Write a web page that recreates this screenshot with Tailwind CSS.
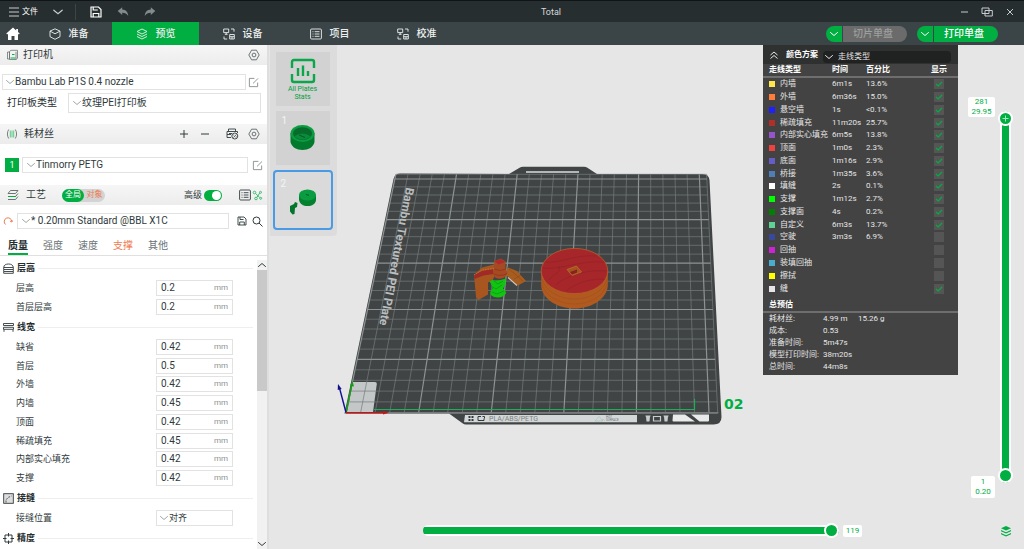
<!DOCTYPE html>
<html lang="zh-CN">
<head>
    <meta charset="UTF-8">
    <meta name="viewport" content="width=device-width, initial-scale=1.0">
    <title>Total</title>
    <script src="https://cdn.jsdelivr.net/npm/@tailwindcss/browser@4"></script>
</head>
<body class="flex h-screen flex-col overflow-hidden bg-[#e6e6e6] font-['Roboto','Noto_Sans_CJK_SC',sans-serif] text-[9px] leading-3 text-[#303a3c]">
    <!-- Shared icons -->
    <svg class="hidden">
        <symbol id="i-chevron" viewBox="0 0 10 10"><path d="M1.500 3.500 5 6.500l3.500-3" fill="none" stroke="currentColor" stroke-linecap="round"/></symbol>
        <symbol id="i-gear" viewBox="0 0 12 12"><g fill="none" stroke="currentColor" stroke-width=".9"><path d="M3.500 1.200h5L9.400 3l1.800 3-1.800 3-.9 1.800h-5L2.600 9 .8 6l1.800-3z" stroke-linejoin="round"/><circle cx="6" cy="6" r="1.900"/></g></symbol>
        <symbol id="i-edit" viewBox="0 0 12 12"><path d="M7 1.500H1.500v9h9V6M5.500 7 11 1.500" fill="none" stroke="currentColor" stroke-width=".9" stroke-linejoin="round"/></symbol>
        <symbol id="i-device" viewBox="0 0 12 12"><path d="M.7 1h5v3.600h-5zM3.200 4.600v1.700M1.800 6.300h2.800M8 1h3v2.700M1 8.500V11h3.200M6.700 6.500h4.600V11H6.700zM6.700 8.700h4.600M9 8.700V11" fill="none" stroke="currentColor" stroke-width=".9"/></symbol>
        <symbol id="i-list" viewBox="0 0 12 12"><g fill="none" stroke="currentColor" stroke-width=".9"><rect x=".6" y="1" width="10.800" height="10" rx="1"/><path d="M2.500 3.700h1M4.700 3.700h4.800M2.500 6h1M4.700 6h4.800M2.500 8.300h1M4.700 8.300h4.800"/></g></symbol>
    </svg>

    <!-- Title bar -->
    <header class="flex h-[22px] shrink-0 items-center border-t border-[#101416] bg-[#262e30] text-[#c8cccd]">
        <div class="flex w-40 items-center pl-2">
            <button class="flex items-center gap-0.5 text-[8px] text-white">
                <svg class="h-3 w-3" viewBox="0 0 12 12"><path d="M1 2h10M1 6h10M1 10h10" stroke="#c8cccd"/></svg>文件
            </button>
            <button class="ml-[14px]" aria-label="展开"><svg class="h-3 w-3"><use href="#i-chevron"/></svg></button>
            <span class="ml-[11px] h-4 w-px bg-[#3d4547]"></span>
            <button class="ml-[14px]" aria-label="保存"><svg class="h-3 w-3" viewBox="0 0 12 12"><path d="M1 1h7.500L11 3.500V11H1zM3.200 1v3h4.600M3.200 11V7.500h5.600V11" fill="none" stroke="#fff" stroke-width="1.200"/></svg></button>
            <button class="ml-[15px]" aria-label="撤销"><svg class="h-3 w-3" viewBox="0 0 12 12"><path d="M.7 5 5.200 1.200v2.300C8.800 3.700 11 6 11.200 10 9.800 7.700 8 6.700 5.200 6.700V9z" fill="#838a8c"/></svg></button>
            <button class="ml-[15px]" aria-label="重做"><svg class="h-3 w-3" viewBox="0 0 12 12"><path d="M11.300 5 6.800 1.200v2.300C3.200 3.700 1 6 .8 10 2.200 7.700 4 6.700 6.800 6.700V9z" fill="#838a8c"/></svg></button>
        </div>
        <h1 class="flex-1 text-center text-[9px] text-[#d6d9da]">Total</h1>
        <div class="flex w-[82px] items-center justify-end gap-[11px] pr-2">
            <button aria-label="最小化"><svg class="h-3 w-3" viewBox="0 0 12 12"><path d="M3 6h7" stroke="currentColor"/></svg></button>
            <button aria-label="还原"><svg class="h-3 w-3" viewBox="0 0 12 12"><path d="M1 2h7v5.500H1zM4 4.500h7.300V10H4z" fill="none" stroke="currentColor"/></svg></button>
            <button aria-label="关闭"><svg class="h-3 w-3" viewBox="0 0 12 12"><path d="m3 3 6 6M9 3 3 9" stroke="currentColor"/></svg></button>
        </div>
    </header>

    <!-- Main tabs -->
    <nav class="flex h-[23px] shrink-0 items-center bg-[#3b4446] text-[10px] font-medium text-[#eef0f0]">
        <button class="flex w-[25px] justify-center" aria-label="主页"><svg class="h-[14px] w-[14px]" viewBox="0 0 14 14"><path d="M7 .5.3 6.600l.9.9.8-.7V13h3.500V9h3v4H12V6.800l.8.7.9-.9L12 5V2h-1.800v1.400z" fill="#fff"/></svg></button>
        <button class="flex h-full w-[87px] items-center justify-center gap-2"><svg class="h-3 w-3" viewBox="0 0 12 12"><path d="m6 .8 5 2.300v5.600L6 11.300 1 8.700V3.100zM1 3.100l5 2.700 5-2.700" fill="none" stroke="currentColor" stroke-width=".9" stroke-linejoin="round"/></svg>准备</button>
        <button class="flex h-full w-[87px] items-center justify-center gap-2 bg-[#00ae42]"><svg class="h-3 w-3" viewBox="0 0 12 12"><path d="m6 1 5 2.500L6 6 1 3.500zM1 6l5 2.500L11 6M1 8.500 6 11l5-2.500" fill="none" stroke="currentColor" stroke-width=".9" stroke-linejoin="round"/></svg>预览</button>
        <button class="flex h-full w-[87px] items-center justify-center gap-2"><svg class="h-3 w-3"><use href="#i-device"/></svg>设备</button>
        <button class="flex h-full w-[87px] items-center justify-center gap-2"><svg class="h-3 w-3"><use href="#i-list"/></svg>项目</button>
        <button class="flex h-full w-[87px] items-center justify-center gap-2"><svg class="h-3 w-3"><use href="#i-device"/></svg>校准</button>
        <div class="ml-auto flex gap-[10px] pr-[26px]">
            <div class="flex h-4 gap-px overflow-hidden rounded-full">
                <button class="flex w-4 items-center justify-center bg-[#00ae42] text-white" aria-label="切片选项"><svg class="h-[10px] w-[10px]"><use href="#i-chevron"/></svg></button>
                <button class="w-16 bg-[#6b6b6b] pr-1 text-[#9b9f9f]" disabled>切片单盘</button>
            </div>
            <div class="flex h-4 gap-px overflow-hidden rounded-full">
                <button class="flex w-4 items-center justify-center bg-[#00ae42] text-white" aria-label="打印选项"><svg class="h-[10px] w-[10px]"><use href="#i-chevron"/></svg></button>
                <button class="w-16 bg-[#00ae42] pr-1 font-medium text-white">打印单盘</button>
            </div>
        </div>
    </nav>

    <div class="flex min-h-0 flex-1">
        <!-- Sidebar -->
        <aside class="flex w-[269px] shrink-0 flex-col border-r-2 border-[#dedede] bg-white">
            <div class="flex h-5 shrink-0 items-center bg-linear-to-b from-[#f6f6f6] to-[#ececec] px-[7px]">
                <svg class="h-3 w-[11px]" viewBox="0 0 11 12"><path d="M.5 3h2v7h-2zM2.500 2.500 4 1.300h6.500v8L9 10.500H2.500zM9 2.800v7.500" fill="none" stroke="#6b7375" stroke-width=".8"/><path d="M3.500 9h5M5 5.500h2.500" stroke="#00ae42" stroke-width="1.200"/></svg>
                <h2 class="ml-[5px] text-[10px]">打印机</h2>
                <button class="ml-auto text-[#5c6567]" aria-label="打印机设置"><svg class="h-3 w-3"><use href="#i-gear"/></svg></button>
            </div>
            <div class="mt-[9px] flex items-center gap-[2px] pl-[2px]">
                <div class="flex h-4 w-[244px] items-center border border-[#e2e2e2] pl-[2px]">
                    <svg class="h-[10px] w-[10px] text-[#a0a6a7]"><use href="#i-chevron"/></svg>
                    <select class="flex-1 appearance-none text-[10px]" aria-label="打印机型号"><option>Bambu Lab P1S 0.4 nozzle</option></select>
                </div>
                <button class="text-[#7b8385]" aria-label="编辑打印机"><svg class="h-[11px] w-[11px]"><use href="#i-edit"/></svg></button>
            </div>
            <div class="mt-[3px] flex items-center pr-[6px] pl-[7px]">
                <label for="bed" class="w-[61px] text-[10px] text-[#262e30]">打印板类型</label>
                <div class="flex h-5 flex-1 items-center border border-[#e2e2e2] pl-[3px]">
                    <svg class="h-[10px] w-[10px] text-[#a0a6a7]"><use href="#i-chevron"/></svg>
                    <select id="bed" class="flex-1 appearance-none text-[10px]"><option>纹理PEI打印板</option></select>
                </div>
            </div>

            <div class="mt-[11px] flex h-5 shrink-0 items-center bg-linear-to-b from-[#f6f6f6] to-[#ececec] px-[7px]">
                <svg class="h-3 w-[10px]" viewBox="0 0 10 12"><path d="M1.700 1.500C0 4 0 8 1.700 10.500M8.300 1.500C10 4 10 8 8.300 10.500" fill="none" stroke="#6b7375" stroke-width=".9"/><path d="M3.300 2.500v7M5 2.500v7M6.700 2.500v7" stroke="#4fc47c" stroke-width=".9"/></svg>
                <h2 class="ml-[7px] text-[10px]">耗材丝</h2>
                <button class="ml-auto" aria-label="添加耗材"><svg class="h-[10px] w-[10px]" viewBox="0 0 10 10"><path d="M1 5h8M5 1v8" stroke="currentColor"/></svg></button>
                <button class="ml-[11px]" aria-label="删除耗材"><svg class="h-[10px] w-[10px]" viewBox="0 0 10 10"><path d="M1 5h8" stroke="currentColor"/></svg></button>
                <button class="ml-[16px]" aria-label="同步耗材"><svg class="h-3 w-[13px]" viewBox="0 0 13 12"><path d="M2.500 3.500V1h7v2.500M1 3.500h10.500V5M1 3.500V9.500h4M3 5.500h3M1 6.500h4" fill="none" stroke="currentColor" stroke-width=".9"/><circle cx="8.800" cy="8" r="3" fill="#f0f0f0" stroke="currentColor" stroke-width=".9"/><path d="m7.500 9.500 2.800-3M7.200 7.500l.5-1M10.400 8.500l-.5 1" stroke="currentColor" stroke-width=".8"/></svg></button>
                <button class="ml-[9px] text-[#5c6567]" aria-label="耗材设置"><svg class="h-3 w-3"><use href="#i-gear"/></svg></button>
            </div>
            <div class="mt-[13px] flex items-center pr-1 pl-[5px]">
                <span class="flex h-[14px] w-[14px] items-center justify-center bg-[#00ae42] text-white">1</span>
                <div class="ml-[3px] flex h-4 w-[227px] items-center border border-[#e2e2e2] pl-[3px]">
                    <svg class="h-[10px] w-[10px] text-[#a0a6a7]"><use href="#i-chevron"/></svg>
                    <select class="flex-1 appearance-none text-[10px]" aria-label="耗材"><option>Tinmorry PETG</option></select>
                </div>
                <button class="ml-[4px] text-[#7b8385]" aria-label="编辑耗材"><svg class="h-[11px] w-[11px]"><use href="#i-edit"/></svg></button>
            </div>

            <div class="mt-3 flex h-5 shrink-0 items-center bg-linear-to-b from-[#f6f6f6] to-[#ececec] pr-1 pl-[7px]">
                <svg class="h-3 w-3" viewBox="0 0 12 12"><path d="M3.500 1.500H11L8.500 4.500H1zM1 7.500h7.500L11 4.500M1 10.500h7.500L11 7.500" fill="none" stroke="#5c6567" stroke-width=".9" stroke-linejoin="round"/><path d="M1 7.500h7.500l1-1" fill="none" stroke="#00ae42"/></svg>
                <h2 class="ml-[7px] text-[10px]">工艺</h2>
                <div class="ml-4 flex h-[13px] w-[43px] items-center rounded-full bg-[#d3d3d3] text-[8px]">
                    <button class="h-full w-[22px] rounded-full bg-[#00ae42] text-white">全局</button>
                    <button class="flex-1 text-[#f07a50]">对象</button>
                </div>
                <label for="advanced" class="ml-auto text-[9px]">高级</label>
                <span class="relative ml-[2px] flex">
                    <input id="advanced" type="checkbox" checked class="peer h-[11px] w-[18px] appearance-none rounded-full bg-[#b5b5b5] checked:bg-[#00ae42]">
                    <span class="pointer-events-none absolute top-px left-px h-[9px] w-[9px] rounded-full bg-white peer-checked:left-2"></span>
                </span>
                <button class="ml-[17px]" aria-label="参数列表"><svg class="h-3 w-3"><use href="#i-list"/></svg></button>
                <button class="ml-px text-[#3fbf70]" aria-label="对比"><svg class="h-[11px] w-[11px]" viewBox="0 0 11 11"><g fill="none" stroke="currentColor"><circle cx="2.500" cy="2.500" r="1.300"/><circle cx="8.500" cy="2.300" r="1"/><circle cx="4" cy="8.500" r="1.300"/><circle cx="8.700" cy="8.300" r="1"/><path d="m3.500 3.500 4.300 4M7.700 3 5 7.300"/></g></svg></button>
            </div>
            <div class="mt-[8px] flex items-center pr-1 pl-[3px]">
                <button class="text-[#f07a50]" aria-label="重置"><svg class="h-[10px] w-[10px]" viewBox="0 0 10 10"><path d="M2.500 8.500A3.800 3.800 0 1 1 8.800 5.500M7 5l1.800 1L10 4.300" fill="none" stroke="currentColor"/></svg></button>
                <div class="ml-[4px] flex h-4 w-[212px] items-center border border-[#e2e2e2] pl-[3px]">
                    <svg class="h-[10px] w-[10px] text-[#a0a6a7]"><use href="#i-chevron"/></svg>
                    <select class="flex-1 appearance-none text-[10px]" aria-label="工艺预设"><option>* 0.20mm Standard @BBL X1C</option></select>
                </div>
                <button class="ml-auto" aria-label="保存预设"><svg class="h-[10px] w-[10px]" viewBox="0 0 10 10"><path d="M1 1h6l2 2v6H1zM3 1v2.500h3.500M2.700 9V6h4.600v3" fill="none" stroke="currentColor" stroke-width=".9"/></svg></button>
                <button class="ml-[5px]" aria-label="搜索"><svg class="h-[11px] w-[11px]" viewBox="0 0 11 11"><circle cx="4.500" cy="4.500" r="3.500" fill="none" stroke="currentColor"/><path d="m7 7 3.500 3.500" stroke="currentColor"/></svg></button>
            </div>
            <div class="mt-[10px] flex h-[17px] shrink-0 gap-[15px] border-b border-[#e0e0e0] pl-2 text-[10px] text-[#6b7375]">
                <button class="h-4 border-b-2 border-[#00ae42] font-bold text-[#262e30]">质量</button>
                <button class="h-4 pb-0.5">强度</button>
                <button class="h-4 pb-0.5">速度</button>
                <button class="h-4 pb-0.5 text-[#f07a50]">支撑</button>
                <button class="h-4 pb-0.5">其他</button>
            </div>

            <!-- Parameters -->
            <div class="flex min-h-0 flex-1">
                <div class="flex-1 overflow-hidden pt-[6px] pr-1 pl-[3px]">
                    <div class="flex h-3 items-center gap-[3px]">
                        <svg class="h-[11px] w-[11px]" viewBox="0 0 11 11"><path d="M.7 4.500C.7 2 3 1 5.500 1s4.800 1 4.800 3.500zM.7 4.500v2h9.600v-2M.7 6.500v2h9.600v-2M.7 8.500v1.800h9.600V8.500" fill="none" stroke="#303a3c" stroke-width=".9"/></svg>
                        <h3 class="font-bold text-[#262e30]">层高</h3><span class="h-px flex-1 bg-[#eeeeee]"></span>
                    </div>
                    <div id="heightRows" class="mt-[6px] flex h-[35px] flex-col justify-between"></div>
                    <div class="mt-[6px] flex h-3 items-center gap-[3px]">
                        <svg class="h-[11px] w-[11px]" viewBox="0 0 11 11"><path d="M.5 1.500h10v2H.5zM.5 5.300h10v2H.5zM1 7.300v2.500M10 7.300v2.500" fill="none" stroke="#303a3c" stroke-width=".9"/></svg>
                        <h3 class="font-bold text-[#262e30]">线宽</h3><span class="h-px flex-1 bg-[#eeeeee]"></span>
                    </div>
                    <div id="widthRows" class="mt-[6px] flex h-[147px] flex-col justify-between"></div>
                    <div class="mt-[6px] flex h-3 items-center gap-[3px]">
                        <svg class="h-[11px] w-[11px]" viewBox="0 0 11 11"><rect x=".7" y=".7" width="9.600" height="9.600" fill="#ddd" stroke="#303a3c" stroke-width=".9"/><path d="M3 9.500V7l2-2.500L8.500 3" fill="none" stroke="#303a3c" stroke-width=".8" stroke-dasharray="2 1"/></svg>
                        <h3 class="font-bold text-[#262e30]">接缝</h3><span class="h-px flex-1 bg-[#eeeeee]"></span>
                    </div>
                    <div class="mt-[6px] flex h-4 items-center pl-[13px]">
                        <label for="seam" class="w-[140px]">接缝位置</label>
                        <div class="flex h-4 w-[77px] items-center border border-[#e2e2e2] pl-[2px]">
                            <svg class="h-[10px] w-[10px] text-[#a0a6a7]"><use href="#i-chevron"/></svg>
                            <select id="seam" class="flex-1 appearance-none"><option>对齐</option></select>
                        </div>
                    </div>
                    <div class="mt-[6px] flex h-3 items-center gap-[3px]">
                        <svg class="h-[11px] w-[11px]" viewBox="0 0 11 11"><path d="M2 2h7v7H2zM5.500 0v3.500M5.500 7.500V11M0 5.500h3.500M7.500 5.500H11" fill="none" stroke="#303a3c"/></svg>
                        <h3 class="font-bold text-[#262e30]">精度</h3><span class="h-px flex-1 bg-[#eeeeee]"></span>
                    </div>
                </div>
                <div class="mt-[4px] flex w-[10px] flex-col bg-[#f1f1f1]">
                    <svg class="h-[10px] w-[10px] rotate-180"><use href="#i-chevron"/></svg>
                    <div class="h-[121px] bg-[#c9c9c9]"></div>
                    <svg class="mt-auto h-[10px] w-[10px]"><use href="#i-chevron"/></svg>
                </div>
            </div>
        </aside>

        <!-- 3D canvas -->
        <main class="relative flex-1 overflow-hidden">
            <svg class="absolute inset-0 h-full w-full" viewBox="269 45 755 504">
                <!-- plate body -->
                <path d="M509 174l11-6.500q1-.7 3-.7h61q2 0 3 .7l10 6.500h105q7 0 7.500 6L721.500 417q0 7.500-8 7.500H466q-2 0-3.500-1.200L449 413.500H344.500L393.500 179q1.500-5.500 7-5.500z" fill="#404445"/>
                <path d="M526 171.300h53v1.500h-53z" fill="#dcdede"/>
                <path d="M353 382h22q2 0 1.800 2L373 412h-26z" fill="#c3c7c7"/>
                <path id="gridThin" fill="none" stroke="#767b7b" stroke-width=".7"/>
                <path id="gridThick" fill="none" stroke="#8d9292" stroke-width="1.200"/>
                <path d="M346 412.800h372.500" stroke="#7c8181"/>
                <path d="M374 409.500h320.500V399" fill="none" stroke="#1fae57" stroke-width="1.200"/>
                <!-- front label strip -->
                <path d="M465 415h172v7.200H464z" fill="#d3d7d7"/>
                <path d="M468.500 416h2v2h-2zM471.500 416h2v2h-2zM468.500 419h2v2h-2zM471.500 419h2v2h-2z" fill="#303a3c"/>
                <path d="M478 416.500h3M478 416.500v4h6v-2M482.500 416.500h2v2" fill="none" stroke="#303a3c"/>
                <text x="489" y="421" class="font-['Roboto'] text-[7px]" fill="#7c8484">PLA/ABS/PETG</text>
                <path d="m595 421 4-4.500 4 4.500zM601 421l2-2 2 2" fill="none" stroke="#a9c0b8" stroke-width=".6"/>
                <text x="606" y="418" class="font-['Roboto'] text-[3px]" fill="#6b7375">HOT</text>
                <text x="606" y="421" class="font-['Roboto'] text-[3px]" fill="#6b7375">SURFACE</text>
                <path d="M645.500 415.500h5v1h-.5l-.5 5h-3l-.5-5h-.5zM663.500 415.500h5v1h-.5l-.5 5h-3l-.5-5h-.5z" fill="#c9cdcd"/>
                <path d="M653.500 416.500h7v4.500h-7z" fill="none" stroke="#c9cdcd" stroke-width="1.200"/>
                <path d="M673 414.500h12l10 7H673.500q-1 0-1-1zM691 414.500h18v6q0 1-1 1h-8.500z" fill="#e9ebeb"/>
                <text transform="translate(406 187) rotate(101)" class="font-['Roboto'] text-[12px] font-bold" fill="#b9bdbd">Bambu Textured PEI Plate</text>
                <text x="724" y="409" class="font-['DejaVu_Sans'] text-[14px] font-bold" fill="#00ae42">02</text>
                <!-- axes -->
                <path d="M346 412.500 352 384" stroke="#12a012" stroke-width="1.400"/><path d="m352.500 381 1.500 5.500-4-1z" fill="#12a012"/>
                <path d="M346 412.500 339.500 388" stroke="#101090" stroke-width="1.400"/><path d="m338 384 3.700 5-4 1z" fill="#101090"/>
                <path d="M346 412.800h38" stroke="#c01818" stroke-width="1.400"/><path d="m389 412.800-6-1.800v3.600z" fill="#c01818"/>
                <!-- disc -->
                <path d="M541.200 271v15c1 13 16 22.500 33.300 22.500S606.500 299 607.800 286v-15z" fill="#b05a20"/>
                <path d="M542 279c3 12 17 20 32.500 20S604 291 607 279M542 284c3 12 17 20 32.500 20S604 296 607 284" fill="none" stroke="#a34f1b" stroke-width=".6"/>
                <ellipse cx="574.500" cy="271" rx="33.300" ry="22.600" fill="#a6262a" stroke="#b8602a" stroke-width=".8"/>
                <path d="M545 262c14 2 30-8 52-6M543 268c20 2 36-8 61-6M556 285c8-8 30-16 50-14M549 280c6-8 12-6 10-14M566 291c10-8 22-12 38-12" fill="none" stroke="#8f2226" stroke-width=".6"/>
                <path d="m567 269.500 9.500-3.500 5 6-9.500 3.500z" fill="#a3541f" stroke="#c0802f" stroke-width=".6"/>
                <path d="m570 272 7-2.500v3l-5 2z" fill="#8a2020"/>
                <!-- small part -->
                <path d="M488 279q8 3 18-.5l-.5 6-2.500 4q3 2 3 5-3 4-8 4t-7.500-3q-.5-3 2-6-1-5-4.500-9.500z" fill="#12c412"/>
                <path d="m491 286 5 3 6-4M492 292l5 2 7-3M494 281l4 3 5-3" fill="none" stroke="#0a9a14" stroke-width=".8"/>
                <path d="m474 275 8-7.500 12-3 2 8-3 7-5 3v12l-9.500 5.500-2.500-3z" fill="#a8561f"/>
                <path d="m474 275 8-4 11-2 .5 5-10 1.500-9 3.500z" fill="#a02a28"/>
                <path d="m474 275 8-5 12-1.500" fill="none" stroke="#c07a30" stroke-width=".8" stroke-dasharray="1.500 1"/>
                <path d="m507 267 10 4 9 10-8 4.500-11-9.500z" fill="#a85d20"/>
                <path d="m508 277.500 9 8" stroke="#d8c6b8" stroke-width="1.200"/>
                <path d="m509 269 14 12M514 279l7-4" stroke="#8d4a16" stroke-width=".7"/>
                <path d="m494 261 7-2.500 4.500 3v7l2 4q-.5 5-6 6t-8-3l1-8z" fill="#a54a22"/>
                <path d="m494.500 261 6.500-2 4 3-6.500 2.500z" fill="#b02a2b"/>
                <path d="M494 269q6 3 12 0M493.500 274q7 3 13.500-.5" fill="none" stroke="#8d3416" stroke-width=".7"/>
            </svg>

            <!-- Plate list -->
            <div class="absolute top-0 left-px flex w-[67px] flex-col items-center gap-[5px] rounded-br bg-[#dcdcdc] pt-[7px] pr-[2px] pb-[6px]">
                <button class="flex h-[54px] w-[54px] flex-col items-center bg-[#d2d2d2] pt-[6px] text-[7px] leading-2 text-[#00a03c]">
                    <svg class="mb-px h-[26px] w-[26px] shrink-0" viewBox="0 0 26 26"><path d="M2 10V4q0-2 2-2h18q2 0 2 2v6M2 16v6q0 2 2 2h18q2 0 2-2v-6M8 10v8M13 7.500V18M18 13v5" fill="none" stroke="#0aa64a" stroke-width="2.400"/></svg>
                    All Plates<br>Stats
                </button>
                <button class="relative h-[54px] w-[54px] bg-[#d2d2d2]" aria-label="盘 1">
                    <span class="absolute top-1 left-1.5 text-[10px] text-[#f4f4f4]">1</span>
                    <svg class="h-full w-full" viewBox="0 0 54 54"><path d="M14.500 22v9c1 5 6 8 12 8s11-3 12-8v-9z" fill="#027a2e"/><ellipse cx="26.500" cy="22.500" rx="12" ry="8.500" fill="#0a9c40"/><ellipse cx="26.500" cy="22.500" rx="9.500" ry="6.300" fill="#066b2b"/><path d="M18 25.500q8.500-6 17 0-8.500 6-17 0z" fill="#0c8a3b"/><path d="m23 24 6 2.500" stroke="#045c22"/></svg>
                </button>
                <button class="relative h-[60px] w-[60px] rounded-sm border-2 border-[#4a9be6] bg-[#dadada]" aria-label="盘 2">
                    <span class="absolute top-1.5 left-1.5 text-[10px] text-[#f4f4f4]">2</span>
                    <svg class="h-full w-full" viewBox="0 0 56 56"><path d="M24 23v5c1 4 4 6 8.500 6s8-2 8.500-6v-5z" fill="#04802f"/><ellipse cx="32.500" cy="23" rx="8.500" ry="5.500" fill="#0a9c40"/><path d="m31 22.500 3 .8" stroke="#045c22"/><path d="m15 34 4-2 1-2 2.500 1-.5 4-2 1-.5 6-2 .5-2.500-3z" fill="#04752c"/></svg>
                </button>
            </div>

            <!-- Color scheme panel -->
            <section class="absolute top-0 right-[66px] w-[195px] bg-[#434343] pb-[3px] text-[8px] text-[#e6e6e6]">
                <div class="flex h-[19px] items-center bg-[#2f3030] pr-[7px] pl-[6px]">
                    <button aria-label="收起"><svg class="h-[10px] w-[10px]" viewBox="0 0 10 10"><path d="m1.500 5 3.500-3 3.500 3M1.500 8.500 5 5.500l3.500 3" fill="none" stroke="currentColor"/></svg></button>
                    <label for="scheme" class="ml-[7px] font-bold text-white">颜色方案</label>
                    <div class="mt-1 ml-[5px] flex h-3 flex-1 items-center gap-1 rounded-sm bg-[#202121] pl-px">
                        <svg class="h-[10px] w-[10px]"><use href="#i-chevron"/></svg>
                        <select id="scheme" class="flex-1 appearance-none"><option>走线类型</option></select>
                    </div>
                </div>
                <table class="w-full table-fixed text-left">
                    <thead>
                        <tr class="border-b-2 border-[#6e6e6e] font-bold text-white">
                            <th class="h-[13px] w-[69px] pl-[6px]">走线类型</th>
                            <th class="w-[34px]">时间</th>
                            <th>百分比</th>
                            <th class="w-[37px] pl-[10px]">显示</th>
                        </tr>
                    </thead>
                </table>
                <table class="h-[217px] w-full table-fixed">
                    <tbody id="legend"></tbody>
                </table>
                <h3 class="border-b-2 border-[#6e6e6e] pt-[4px] pl-[6px] font-bold text-white">总预估</h3>
                <dl class="grid h-[59px] grid-cols-[54px_35px_1fr] content-between gap-x-0 pl-[6px]">
                    <dt class="whitespace-nowrap">耗材丝:</dt><dd>4.99 m</dd><dd>15.26 g</dd>
                    <dt class="whitespace-nowrap">成本:</dt><dd class="col-span-2">0.53</dd>
                    <dt class="whitespace-nowrap">准备时间:</dt><dd class="col-span-2">5m47s</dd>
                    <dt class="whitespace-nowrap">模型打印时间:</dt><dd class="col-span-2">38m20s</dd>
                    <dt class="whitespace-nowrap">总时间:</dt><dd class="col-span-2">44m8s</dd>
                </dl>
            </section>

            <!-- Layer slider -->
            <div class="absolute top-[66px] right-[11px] bottom-[66px] w-[15px]">
                <input type="range" min="1" max="281" value="281" aria-label="顶层" class="absolute inset-0 h-full w-[15px] appearance-none bg-transparent [direction:rtl] [writing-mode:vertical-lr] [&::-webkit-slider-runnable-track]:w-[11px] [&::-webkit-slider-runnable-track]:rounded-full [&::-webkit-slider-runnable-track]:bg-[linear-gradient(to_right,white_2px,#00ae42_2px,#00ae42_9px,white_9px)] [&::-webkit-slider-thumb]:-ml-[2px] [&::-webkit-slider-thumb]:h-[15px] [&::-webkit-slider-thumb]:w-[15px] [&::-webkit-slider-thumb]:appearance-none [&::-webkit-slider-thumb]:rounded-full [&::-webkit-slider-thumb]:border-2 [&::-webkit-slider-thumb]:border-white [&::-webkit-slider-thumb]:bg-[#00ae42]">
                <input type="range" min="1" max="281" value="1" aria-label="底层" class="pointer-events-none absolute inset-0 h-full w-[15px] appearance-none bg-transparent [direction:rtl] [writing-mode:vertical-lr] [&::-webkit-slider-runnable-track]:w-[11px] [&::-webkit-slider-thumb]:pointer-events-auto [&::-webkit-slider-thumb]:-ml-[2px] [&::-webkit-slider-thumb]:h-[15px] [&::-webkit-slider-thumb]:w-[15px] [&::-webkit-slider-thumb]:appearance-none [&::-webkit-slider-thumb]:rounded-full [&::-webkit-slider-thumb]:border-2 [&::-webkit-slider-thumb]:border-white [&::-webkit-slider-thumb]:bg-[#00ae42]">
                <svg class="pointer-events-none absolute top-0 left-0 h-[15px] w-[15px]" viewBox="0 0 15 15"><path d="M4.500 7.500h6M7.500 4.500v6" stroke="#a6e3bd"/></svg>
            </div>
            <output class="absolute top-[52px] right-[29px] w-[27px] rounded-xs bg-white text-center text-[8px] leading-[10px] text-[#00ae42]">281<br>29.95</output>
            <output class="absolute right-[29px] bottom-[51px] w-6 rounded-xs bg-white py-px text-center text-[8px] leading-[10px] text-[#00ae42]">1<br>0.20</output>

            <!-- Move slider -->
            <div class="absolute right-[162px] bottom-[11px] left-[154px] flex items-center gap-1">
                <input type="range" min="0" max="119" value="119" aria-label="步数" class="h-[15px] min-w-0 flex-1 appearance-none bg-transparent [&::-webkit-slider-runnable-track]:h-[11px] [&::-webkit-slider-runnable-track]:rounded-full [&::-webkit-slider-runnable-track]:bg-[linear-gradient(white_2px,#00ae42_2px,#00ae42_9px,white_9px)] [&::-webkit-slider-thumb]:-mt-[2px] [&::-webkit-slider-thumb]:h-[15px] [&::-webkit-slider-thumb]:w-[15px] [&::-webkit-slider-thumb]:appearance-none [&::-webkit-slider-thumb]:rounded-full [&::-webkit-slider-thumb]:border-2 [&::-webkit-slider-thumb]:border-white [&::-webkit-slider-thumb]:bg-[#00ae42]">
                <output class="w-[19px] rounded-xs bg-white text-center text-[8px] text-[#00ae42]">119</output>
            </div>
            <button class="absolute right-3 bottom-3" aria-label="图层"><svg class="h-3 w-3" viewBox="0 0 12 12"><path d="m6 1 5 2.200-5 2.200-5-2.200zM1 5l5 2.200L11 5v1.200L6 8.400 1 6.200zM1 8l5 2.200L11 8v1.200l-5 2.200-5-2.200z" fill="#00ae42"/></svg></button>
        </main>
    </div>

    <script>
        const heights = [['层高', '0.2'], ['首层层高', '0.2']];
        const widths = [
            ['缺省', '0.42'], ['首层', '0.5'], ['外墙', '0.42'], ['内墙', '0.45'],
            ['顶面', '0.42'], ['稀疏填充', '0.45'], ['内部实心填充', '0.42'], ['支撑', '0.42']
        ];
        const lines = [
            ['内墙', '6m1s', '13.6%', '#ffe64d', true],
            ['外墙', '6m36s', '15.0%', '#ff7d38', true],
            ['悬空墙', '1s', '<0.1%', '#1f1fff', true],
            ['稀疏填充', '11m20s', '25.7%', '#b03029', true],
            ['内部实心填充', '6m5s', '13.8%', '#9654cc', true],
            ['顶面', '1m0s', '2.3%', '#f04040', true],
            ['底面', '1m16s', '2.9%', '#665cc7', true],
            ['桥接', '1m35s', '3.6%', '#4d80ba', true],
            ['填缝', '2s', '0.1%', '#ffffff', true],
            ['支撑', '1m12s', '2.7%', '#00ff00', true],
            ['支撑面', '4s', '0.2%', '#008000', true],
            ['自定义', '6m3s', '13.7%', '#5ed194', true],
            ['空驶', '3m3s', '6.9%', '#38489b', false],
            ['回抽', '', '', '#cd22d6', false],
            ['装填回抽', '', '', '#49adcf', false],
            ['擦拭', '', '', '#ffff00', false],
            ['缝', '', '', '#e6e6e6', true]
        ];

        function renderRows(id, rows) {
            document.getElementById(id).innerHTML = rows.map(([name, value], i) => `
                <div class="flex h-4 items-center pl-[13px]">
                    <label for="${id}${i}" class="w-[140px]">${name}</label>
                    <div class="flex h-4 w-[77px] items-center border border-[#e2e2e2] px-1">
                        <input id="${id}${i}" value="${value}" class="w-0 flex-1 text-[10px] outline-none">
                        <span class="text-[8px] text-[#8b9293]">mm</span>
                    </div>
                </div>`).join('');
        }
        renderRows('heightRows', heights);
        renderRows('widthRows', widths);

        document.getElementById('legend').innerHTML = lines.map(([name, time, pct, color, on], i) => `
            <tr>
                <td class="w-[69px] p-0 pl-[6px]"><label for="line${i}" class="flex h-3 items-center gap-[5px] whitespace-nowrap"><span class="h-[6px] w-[6px] shrink-0" style="background:${color}"></span>${name}</label></td>
                <td class="w-[34px] p-0">${time}</td>
                <td class="p-0">${pct.replace('<', '&lt;')}</td>
                <td class="w-[37px] p-0"><span class="relative ml-[13px] flex h-[10px] w-[10px]">
                    <input id="line${i}" type="checkbox" ${on ? 'checked' : ''} class="peer h-[10px] w-[10px] appearance-none bg-[#555555]">
                    <svg class="pointer-events-none absolute inset-0 hidden h-[10px] w-[10px] peer-checked:block" viewBox="0 0 10 10"><path d="m2 5 2.200 2L8 3" fill="none" stroke="#00ae42" stroke-width="1.200"/></svg>
                </span></td>
            </tr>`).join('');

        // Plate grid, millimetres to screen
        function project(mx, my) {
            const y = (413 - 0.8 * my) / (1 + 0.000759 * my);
            const t = (413 - y) / 239.5;
            return (346 + 50 * t + mx * (1.452 - 0.239 * t)).toFixed(1) + ' ' + y.toFixed(1);
        }
        let thin = '', thick = '';
        for (let m = 0; m <= 250; m += 10) {
            const d = `M${project(m, 0)}L${project(m, 256)}M${project(0, m)}L${project(256, m)}`;
            if (m % 50 === 0) thick += d; else thin += d;
        }
        thin += `M${project(0, 256)}L${project(256, 256)}L${project(256, 0)}`;
        document.getElementById('gridThin').setAttribute('d', thin);
        document.getElementById('gridThick').setAttribute('d', thick);
    </script>
</body>
</html>
